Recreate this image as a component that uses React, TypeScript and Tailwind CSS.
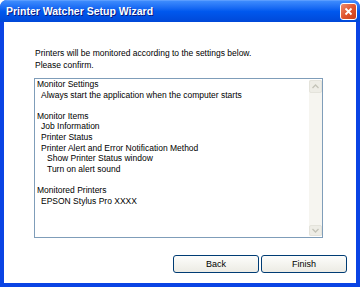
const lines: { text: string; indent: number }[] = [
  { text: 'Monitor Settings', indent: 0 },
  { text: 'Always start the application when the computer starts', indent: 1 },
  { text: '', indent: 0 },
  { text: 'Monitor Items', indent: 0 },
  { text: 'Job Information', indent: 1 },
  { text: 'Printer Status', indent: 1 },
  { text: 'Printer Alert and Error Notification Method', indent: 1 },
  { text: 'Show Printer Status window', indent: 2 },
  { text: 'Turn on alert sound', indent: 2 },
  { text: '', indent: 0 },
  { text: 'Monitored Printers', indent: 0 },
  { text: 'EPSON Stylus Pro XXXX', indent: 1 },
];

function Chevron({ up }: { up?: boolean }) {
  return (
    <svg width="7" height="5" viewBox="0 0 7 5">
      <path
        d={up ? 'M0.5 4 L3.5 1 L6.5 4' : 'M0.5 1 L3.5 4 L6.5 1'}
        fill="none"
        stroke="#c4c3b8"
        strokeWidth="1.3"
      />
    </svg>
  );
}

function Button({ label }: { label: string }) {
  return (
    <button className="w-[86px] h-[18px] rounded-[3px] border border-[#003c74] bg-gradient-to-b from-[#fdfdfb] to-[#ecebe4] text-[9px] leading-none text-black">
      {label}
    </button>
  );
}

export default function App() {
  return (
    <div className="w-[360px] h-[287px] flex flex-col rounded-t-[7px] overflow-hidden bg-[#0a44e4] font-['Liberation_Sans',Arial,sans-serif]">
      {/* title bar */}
      <div className="h-[22px] shrink-0 flex items-center justify-between pl-[6px] pr-[3px] bg-gradient-to-b from-[#3d8bfd] via-[#0058ee] to-[#0048d8] border-t border-[#5a9dff]">
        <span className="text-[10.5px] font-bold text-white [text-shadow:1px_1px_0_#0a1a80]">
          Printer Watcher Setup Wizard
        </span>
        <div className="w-[17px] h-[17px] rounded-[3px] border border-white bg-gradient-to-br from-[#ec8a6c] via-[#e0552e] to-[#c8401a] flex items-center justify-center">
          <svg width="9" height="9" viewBox="0 0 9 9">
            <path d="M1.5 1.5 L7.5 7.5 M7.5 1.5 L1.5 7.5" stroke="white" strokeWidth="1.8" />
          </svg>
        </div>
      </div>

      {/* client area */}
      <div className="flex-1 flex flex-col bg-white ml-[4px] mr-[4px] mb-[4px] pl-[30px] pr-[33px]">
        <div className="pt-[25px] text-[8.5px] leading-[12px] text-black">
          <p className="pl-[1px]">Printers will be monitored according to the settings below.</p>
          <p className="pl-[1px]">Please confirm.</p>
        </div>

        <div className="mt-[7px] h-[160px] border border-[#7f9db9] flex">
          <div className="flex-1 pl-[2px] text-[8.5px] leading-[10.6px] text-black">
            {lines.map((l, i) => (
              <div
                key={i}
                className={`h-[10.6px] whitespace-nowrap ${
                  l.indent === 1 ? 'pl-[4px]' : l.indent === 2 ? 'pl-[10px]' : ''
                }`}
              >
                {l.text}
              </div>
            ))}
          </div>
          <div className="w-[13px] my-[1px] flex flex-col bg-[#f6f5f0]">
            <div className="h-[13px] rounded-[2px] border border-[#e4e3db] bg-[#eeede6] flex items-center justify-center">
              <Chevron up />
            </div>
            <div className="flex-1" />
            <div className="h-[11px] rounded-[2px] border border-[#e4e3db] bg-[#eeede6] flex items-center justify-center">
              <Chevron />
            </div>
          </div>
        </div>

        <div className="mt-[17px] flex justify-end gap-[2px] -mr-[24px]">
          <Button label="Back" />
          <Button label="Finish" />
        </div>
      </div>
    </div>
  );
}
